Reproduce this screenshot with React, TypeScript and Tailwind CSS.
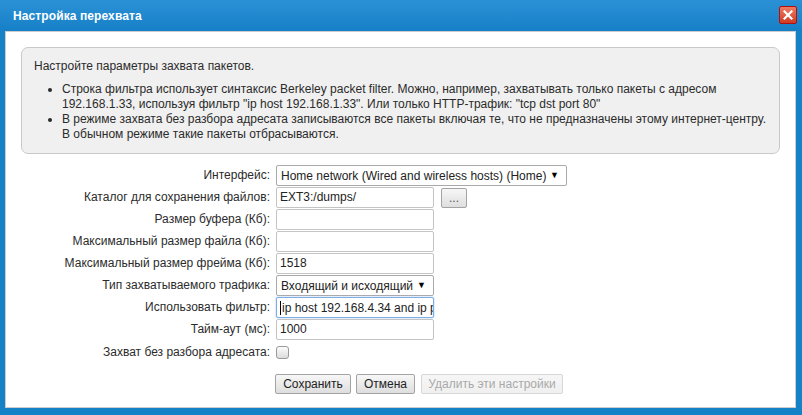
import { useState } from "react";

// Диалог "Настройка перехвата" — форма захвата пакетов

const labelCls = "text-right text-[12px] leading-[21px] text-[#2b2b2b] whitespace-nowrap";
const inputCls =
  "h-[21px] w-[158px] border border-[#c4c4c4] rounded-[2px] bg-white px-[3px] text-[12px] leading-[19px] text-[#222] overflow-hidden whitespace-nowrap";

function Field({ value }: { value?: string }) {
  return <div className={inputCls}>{value}</div>;
}

function Select({ value, width }: { value: string; width: string }) {
  return (
    <div
      className={`${width} h-[21px] border border-[#a9a9a9] rounded-[2px] bg-white pl-[4px] pr-[7px] flex items-center justify-between text-[12px] text-[#222]`}
    >
      <span className="whitespace-nowrap">{value}</span>
      <span className="text-[9px] text-black">▼</span>
    </div>
  );
}

function Button({ children, disabled, className = "" }: { children: React.ReactNode; disabled?: boolean; className?: string }) {
  return (
    <button
      className={`h-[20px] rounded-[2px] border text-[12px] leading-[18px] px-0 whitespace-nowrap bg-gradient-to-b ${
        disabled
          ? "border-[#d6d6d6] from-[#f6f6f6] to-[#f0f0f0] text-[#a9a9a9]"
          : "border-[#a3a3a3] from-[#f7f7f7] to-[#dedede] text-[#222]"
      } ${className}`}
    >
      {children}
    </button>
  );
}

export default function App() {
  const [raw, setRaw] = useState(false);

  return (
    <div
      className="w-[802px] h-[415px] bg-[#1581c7] flex flex-col pl-[5px] pr-[6px] pb-[7px]"
      style={{ fontFamily: '"Liberation Sans", Arial, sans-serif' }}
    >
      {/* title bar */}
      <div className="h-[31px] -ml-[5px] -mr-[6px] pl-[13px] pr-[5px] flex items-center justify-between bg-gradient-to-b from-[#2b91d6] to-[#1580c7]">
        <span className="text-white font-bold text-[12px] tracking-[0.1px]">Настройка перехвата</span>
        <div className="w-[18px] h-[18px] -mt-[1px] rounded-[2px] border border-[#b01010] bg-gradient-to-b from-[#ee7a62] to-[#cf3a22] flex items-center justify-center">
          <svg width="10" height="10" viewBox="0 0 10 10">
            <path d="M1.5 1.5 L8.5 8.5 M8.5 1.5 L1.5 8.5" stroke="white" strokeWidth="2.2" strokeLinecap="square" />
          </svg>
        </div>
      </div>

      {/* content */}
      <div className="flex-1 bg-white border border-[#cdcdcd] px-[15px] pt-[15px]">
        <div className="bg-[#f0f0f0] border border-[#c9c9c9] rounded-[7px] pl-[12px] pr-[10px] pt-[11px] pb-[11px] text-[12px] leading-[15px] text-[#2b2b2b]">
          <p>Настройте параметры захвата пакетов.</p>
          <ul className="list-disc pl-[28px] mt-[8px]">
            <li>
              Строка фильтра использует синтаксис Berkeley packet filter. Можно, например, захватывать только пакеты с адресом
              192.168.1.33, используя фильтр "ip host 192.168.1.33". Или только HTTP-трафик: "tcp dst port 80"
            </li>
            <li>
              В режиме захвата без разбора адресата записываются все пакеты включая те, что не предназначены этому интернет-центру.
              В обычном режиме такие пакеты отбрасываются.
            </li>
          </ul>
        </div>

        <div className="grid grid-cols-[264px_auto] gap-x-[6px] gap-y-[1px] mt-[11px] -ml-[15px] justify-start items-center">
          <div className={labelCls}>Интерфейс:</div>
          <Select value="Home network (Wired and wireless hosts) (Home)" width="w-[291px]" />

          <div className={labelCls}>Каталог для сохранения файлов:</div>
          <div className="flex items-center gap-[7px]">
            <Field value="EXT3:/dumps/" />
            <Button className="w-[26px] text-[10px] text-[#555]">...</Button>
          </div>

          <div className={labelCls}>Размер буфера (Кб):</div>
          <Field />

          <div className={labelCls}>Максимальный размер файла (Кб):</div>
          <Field />

          <div className={labelCls}>Максимальный размер фрейма (Кб):</div>
          <Field value="1518" />

          <div className={labelCls}>Тип захватываемого трафика:</div>
          <Select value="Входящий и исходящий" width="w-[158px]" />

          <div className={labelCls}>Использовать фильтр:</div>
          <div className="h-[21px] w-[158px] border border-[#7eaee6] rounded-[2px] bg-white pl-[3px] flex items-center text-[12px] text-[#222] overflow-hidden whitespace-nowrap shadow-[0_0_2px_#9cc3ef]">
            <span className="inline-block w-px h-[14px] bg-black mr-[1px] shrink-0" />
            <span>ip host 192.168.4.34 and ip p</span>
          </div>

          <div className={labelCls}>Тайм-аут (мс):</div>
          <Field value="1000" />

          <div className={`${labelCls} mt-[1px]`}>Захват без разбора адресата:</div>
          <div className="mt-[1px] h-[21px] flex items-center">
            <button
              onClick={() => setRaw(!raw)}
              className="w-[13px] h-[13px] rounded-[3px] border border-[#9a9a9a] bg-gradient-to-b from-[#fcfcfc] to-[#dcdcdc]"
            />
          </div>
        </div>

        <div className="flex gap-[5px] mt-[11px] ml-[254px]">
          <Button className="w-[76px]">Сохранить</Button>
          <Button className="w-[59px]">Отмена</Button>
          <Button disabled className="w-[142px] ml-[1px]">Удалить эти настройки</Button>
        </div>
      </div>
    </div>
  );
}
